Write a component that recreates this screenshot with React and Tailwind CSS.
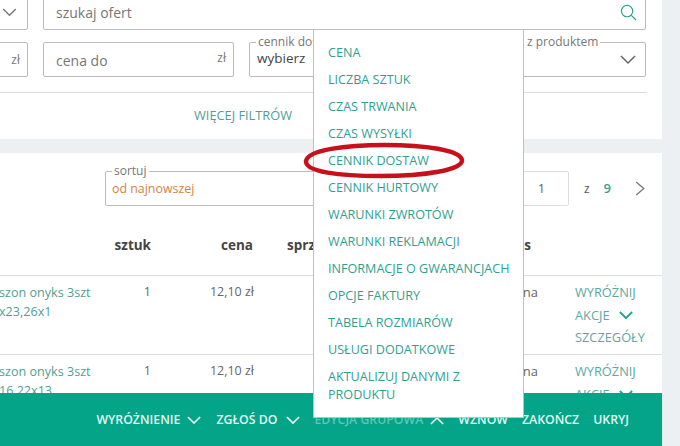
import React from 'react';

const font = { fontFamily: '"Open Sans", sans-serif' };

const menuItems = [
  'CENA',
  'LICZBA SZTUK',
  'CZAS TRWANIA',
  'CZAS WYSYŁKI',
  'CENNIK DOSTAW',
  'CENNIK HURTOWY',
  'WARUNKI ZWROTÓW',
  'WARUNKI REKLAMACJI',
  'INFORMACJE O GWARANCJACH',
  'OPCJE FAKTURY',
  'TABELA ROZMIARÓW',
  'USŁUGI DODATKOWE',
  'AKTUALIZUJ DANYMI Z PRODUKTU',
];

function Chevron({ className, up, strokeWidth = 1.5 }) {
  return (
    <svg viewBox="0 0 16 10" fill="none" stroke="currentColor" strokeWidth={strokeWidth} className={className}>
      <path d={up ? 'M1 9 L8 2 L15 9' : 'M1 1 L8 8 L15 1'} />
    </svg>
  );
}

// pole formularza z etykieta na ramce
function Field({ label, value, className }) {
  return (
    <div className={`relative h-[35px] border border-[#b9bcbc] rounded-[2px] flex items-center ${className}`}>
      <span className="absolute -top-[9px] left-[6px] bg-white px-[2px] text-[12px] leading-[16px] text-[#777]">{label}</span>
      {value}
    </div>
  );
}

function Row({ title1, title2, h }) {
  return (
    <div className={`flex border-t border-[#dcdede] text-[12.5px] leading-[18px] text-[#666] pt-[6px] ${h}`}>
      <div className="w-[120px] -ml-px pt-[1px] text-[12.6px] leading-[19px] text-[#4f9f95]">
        <div className="whitespace-nowrap">{title1}</div>
        <div className="whitespace-nowrap">{title2}</div>
      </div>
      <div className="w-[32px] text-right pt-[1px]">1</div>
      <div className="w-[103px] text-right pt-[1px]">12,10 zł</div>
      <div className="w-[284px] text-right pt-[1px] text-[13px]">na</div>
      <div className="ml-[37px] flex flex-col text-[12.8px] text-[#5ba99f] pt-[1px]">
        <span>WYRÓŻNIJ</span>
        <span className="mt-[5px] flex items-center gap-[9px]">
          AKCJE
          <Chevron className="w-[14px] h-[9px] text-[#1fa592]" strokeWidth={2.2} />
        </span>
        <span className="mt-[4px]">SZCZEGÓŁY</span>
      </div>
    </div>
  );
}

export default function App() {
  return (
    <div className="relative w-[680px] h-[446px] overflow-hidden bg-[#ecf0f2]" style={font}>
      <div className="w-[662px] h-[446px] flex flex-col">
        {/* filtry */}
        <div className="bg-white h-[139px] shrink-0 overflow-hidden">
          <div className="-mt-[5px] flex gap-[15px] pr-[16px] -ml-[42px]">
            <div className="w-[70px] h-[35px] border border-[#b9bcbc] rounded-[2px] flex items-center justify-end pr-[10px] text-[#777]">
              <Chevron className="w-[15px] h-[9px]" />
            </div>
            <div className="flex-1 h-[35px] border border-[#b9bcbc] rounded-[2px] flex items-center justify-between pl-[12px] pr-[8px] text-[14px] text-[#777]">
              szukaj ofert
              <svg viewBox="0 0 18 18" fill="none" stroke="#2f9f90" strokeWidth="1.3" className="w-[17px] h-[17px]">
                <circle cx="7.5" cy="7.5" r="6" />
                <path d="M12 12 L17 17" />
              </svg>
            </div>
          </div>
          <div className="mt-[12px] flex gap-[15px] pr-[16px] -ml-[42px]">
            <div className="w-[70px] h-[35px] border border-[#b9bcbc] rounded-[2px] flex items-center justify-end pr-[7px] text-[12px] text-[#777]">
              zł
            </div>
            <div className="w-[191px] h-[35px] border border-[#b9bcbc] rounded-[2px] flex items-center justify-between pl-[12px] pr-[7px] text-[14px] text-[#777]">
              <span className="mt-[1px]">cena do</span>
              <span className="text-[12px] -mt-[3px]">zł</span>
            </div>
            <Field
              label="cennik dostaw"
              className="w-[191px] pl-[7px]"
              value={<span className="text-[13.5px] text-[#444] -mt-[2px]">wybierz</span>}
            />
            <Field
              label="powiązana z produktem"
              className="w-[191px] justify-end pr-[9px] text-[#666]"
              value={<Chevron className="w-[16px] h-[10px]" />}
            />
          </div>
          <div className="mt-[15px] mr-[15px] border-t border-[#dcdede] pt-[9px] pl-[194px]">
            <span className="text-[12.8px] leading-[18px] text-[#4f9f95]">WIĘCEJ FILTRÓW</span>
          </div>
        </div>

        {/* lista ofert */}
        <div className="bg-white flex-1 mt-[14px] overflow-hidden">
          <div className="flex items-center h-[35px] mt-[18px] pr-[17px]">
            <Field
              label="sortuj"
              className="ml-[105px] w-[220px] pl-[6px]"
              value={<span className="text-[12.4px] mt-[1px] text-[#d9823b]">od najnowszej</span>}
            />
            <div className="ml-auto w-[55px] h-[35px] border border-[#dcdede] rounded-[2px] flex items-center justify-center text-[13px] text-[#666]">
              1
            </div>
            <span className="ml-[15px] text-[12px] text-[#555]">z</span>
            <span className="ml-[14px] text-[13px] font-semibold text-[#3c9f91]">9</span>
            <svg viewBox="0 0 10 16" fill="none" stroke="#777" strokeWidth="1.4" className="ml-[24px] w-[10px] h-[15px]">
              <path d="M1 1 L9 8 L1 15" />
            </svg>
          </div>
          <div className="flex h-[69px] pt-[29px] text-[13.5px] leading-[20px] font-bold text-[#444]">
            <div className="w-[151px] text-right">sztuk</div>
            <div className="w-[102px] text-right">cena</div>
            <div className="ml-[34px] w-[100px]">sprzedano</div>
            <div className="w-[144px] text-right">status</div>
          </div>
          <Row title1="szon onyks 3szt" title2="x23,26x1" h="h-[79px]" />
          <Row title1="szon onyks 3szt" title2="16,22x13," h="h-[80px]" />
        </div>
      </div>

      {/* pasek akcji */}
      <div className="absolute left-0 bottom-0 w-[662px] h-[53px] pt-[1px] bg-[#03a488] flex items-center justify-end gap-[14px] pr-[33px] text-[12.3px] font-semibold text-[#e4f6f2]">
        <span className="flex items-center gap-[7px] mr-[1px]">WYRÓŻNIENIE <Chevron className="w-[14px] h-[9px]" strokeWidth={2} /></span>
        <span className="flex items-center gap-[9px]">ZGŁOŚ DO <Chevron className="w-[14px] h-[9px]" strokeWidth={2} /></span>
        <span className="flex items-center gap-[7px] text-[#5cc7b2]">EDYCJA GRUPOWA <Chevron up className="w-[14px] h-[9px] text-[#e4f6f2]" strokeWidth={2} /></span>
        <span>WZNÓW</span>
        <span>ZAKOŃCZ</span>
        <span>UKRYJ</span>
      </div>

      {/* menu edycji grupowej */}
      <div className="absolute left-[313px] top-[29px] w-[211px] h-[389px] bg-white border border-[#bfc1c1] pl-[14px] pr-[8px] pt-[9px] text-[12.6px] text-[#2f9f90]">
        {menuItems.map((item) => (
          <div key={item} className="py-[4.5px] leading-[18px]">{item}</div>
        ))}
      </div>

      {/* czerwone kolko */}
      <svg viewBox="0 0 170 40" fill="none" className="absolute left-[300px] top-[141px] w-[170px] h-[40px]">
        <path
          d="M6 20 C8 9 45 4 85 4 C125 4 160 9 162 19 C163 29 125 35 80 35 C40 35 5 31 6 20 Z"
          stroke="#c8101c"
          strokeWidth="4.5"
        />
      </svg>
    </div>
  );
}
